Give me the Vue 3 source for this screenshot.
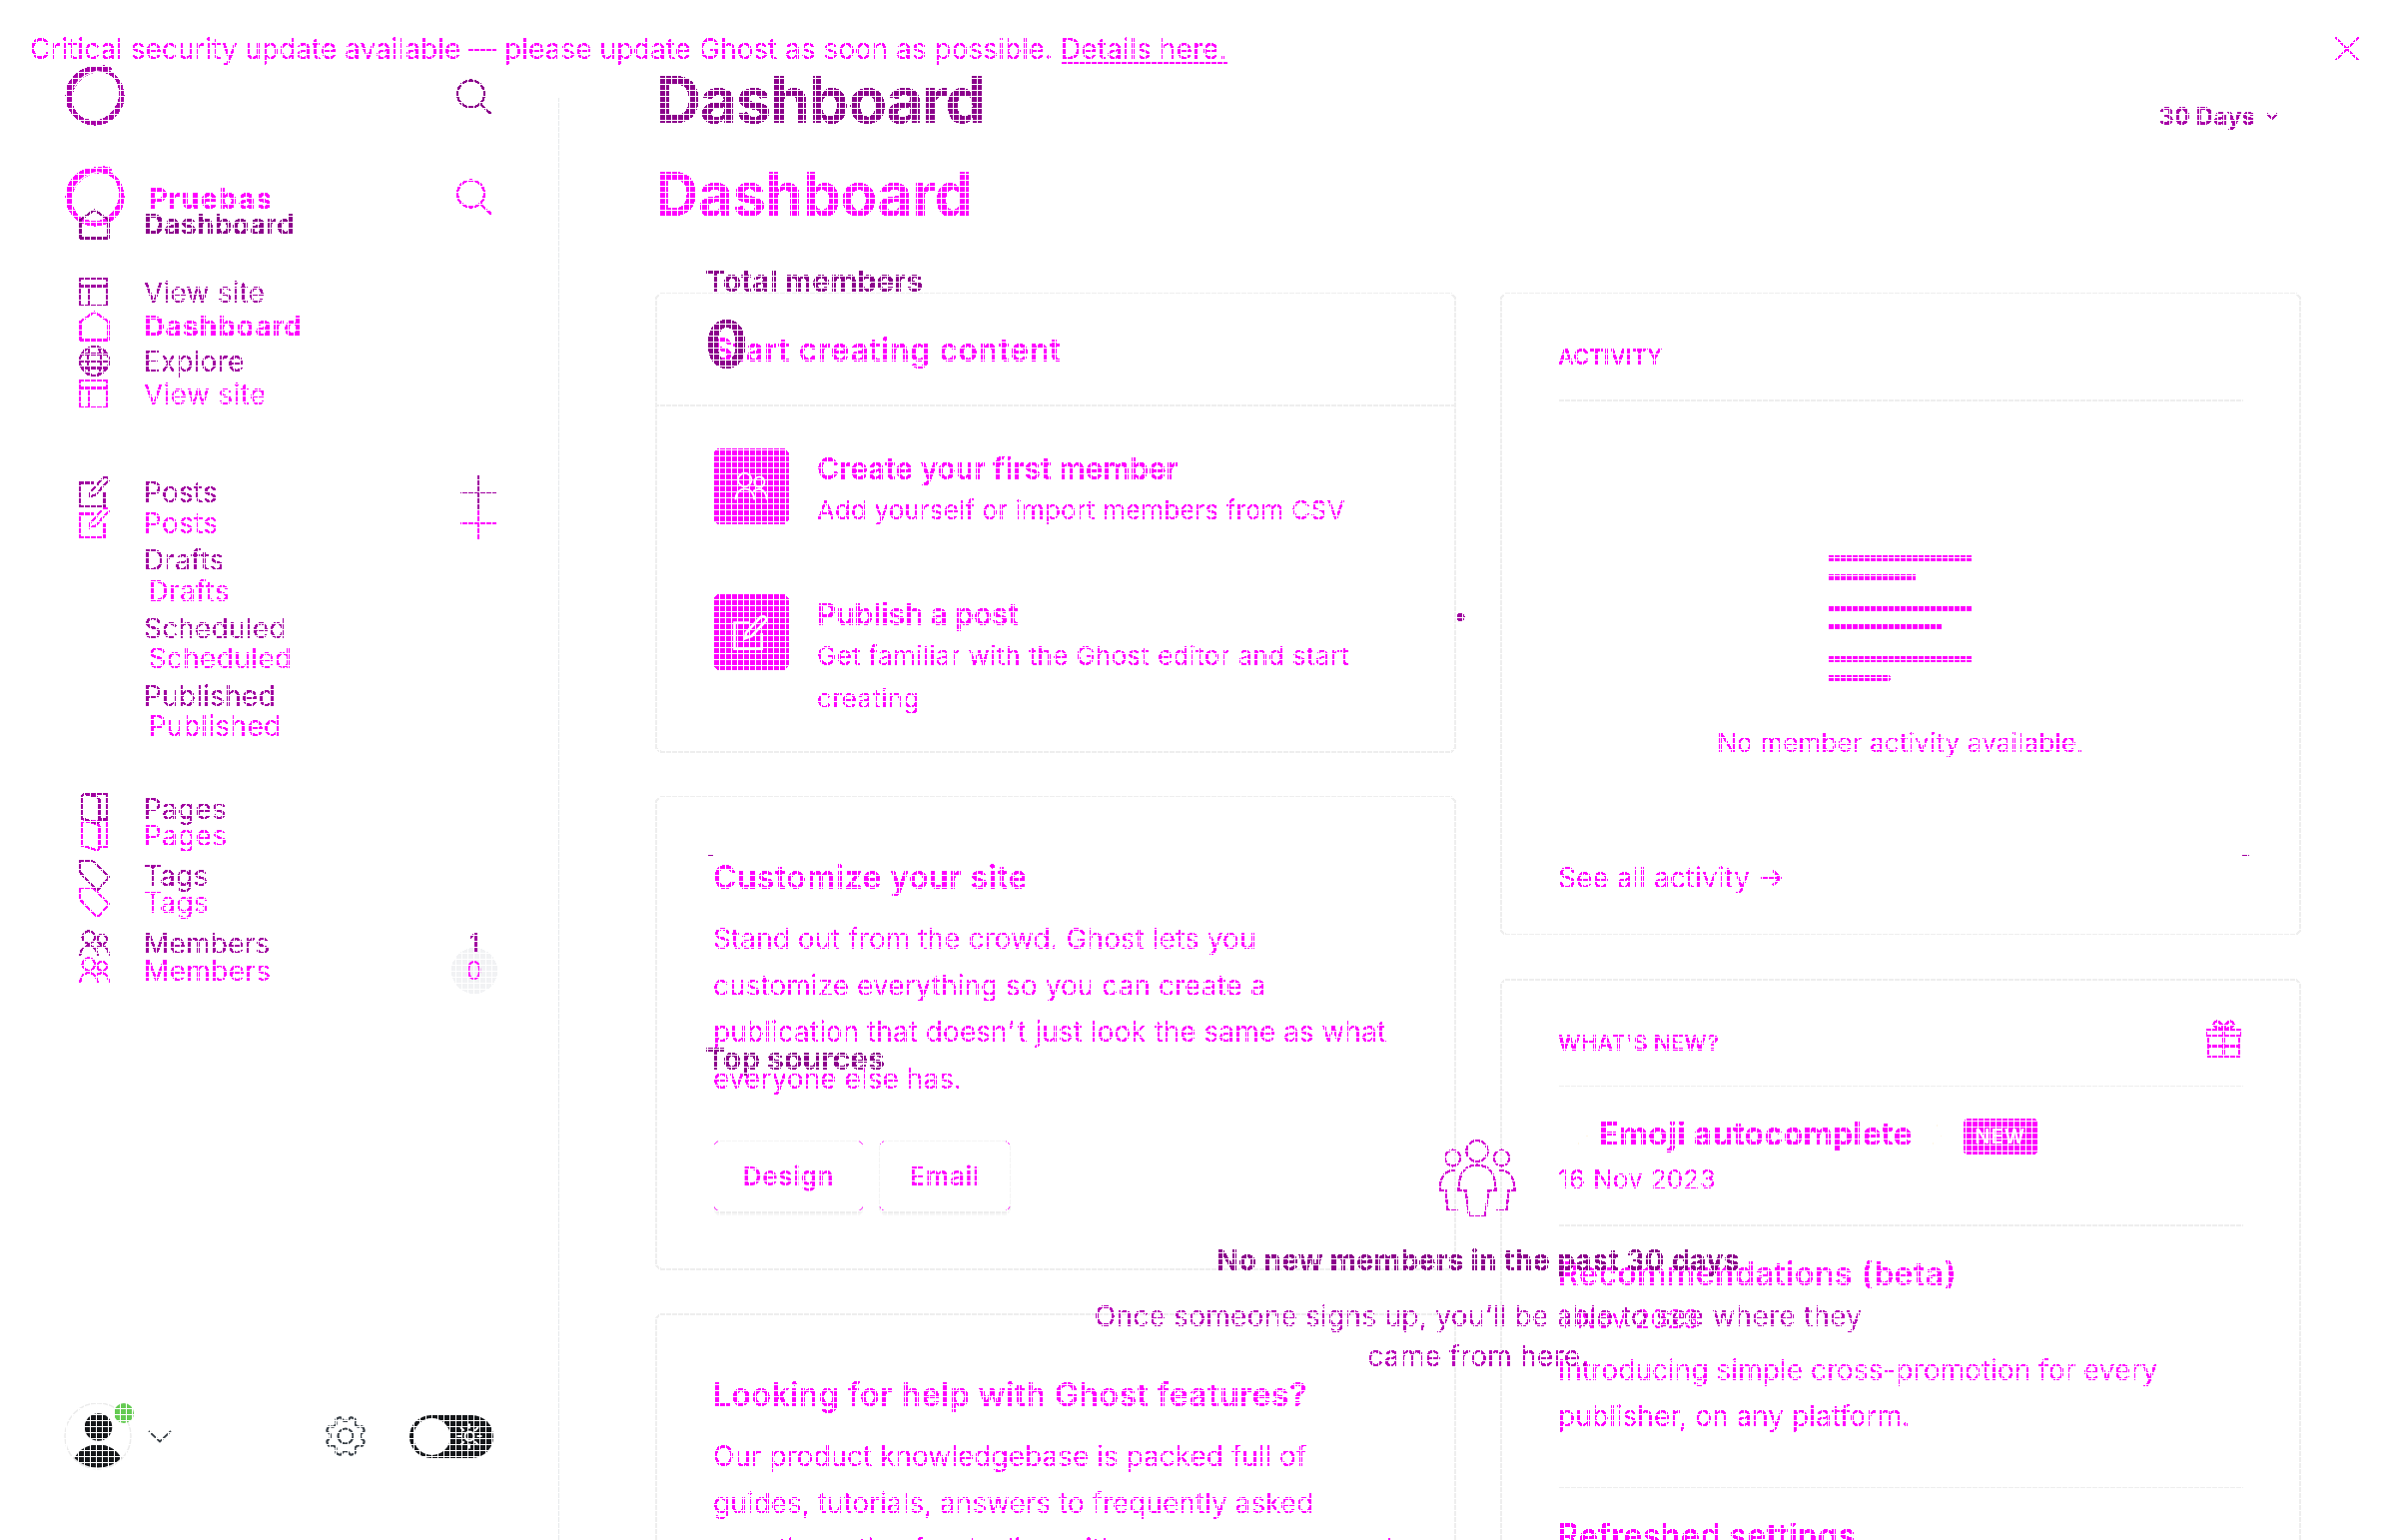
<script setup>
import { h } from 'vue'

const shapes = {
  home: ['M1.5 10.5V29.500H29.500V10.5', 'M0.8 11.500L15.500 1.200L30.200 11.500'],
  site: ['M1.200 2H28.500V29H1.200Z', 'M1.200 9.500H28.500', 'M10.500 9.500V29'],
  globe: ['M1 15.500a14.500 14.500 0 1 0 29 0a14.500 14.500 0 1 0 -29 0', 'M3.500 8.500H27.500M1 15.500H30M2 22.500H29', 'M12 1.500C7.500 9 7.500 22 12 29.500M19 1.500C23.500 9 23.500 22 19 29.500'],
  post: ['M15 6.500H1.200V30H25.500V16', 'M11.500 15.500L24.500 1.500Q28.500 -0.500 30 4L16.500 18.500L10.800 20.500Z'],
  page: ['M6 1.200H28V26.500H22', 'M3 2V25.500L17 30Q20.500 31 20.500 28V7Q20.500 5 18 4.200L7 1.200Q3 0.500 3 4'],
  tag: ['M1.200 1H12.500Q14 1 15.500 2.500L29 15.500Q30.500 17 29 18.500L20 29Q18.500 30.500 17 29L2 13.500Q1.200 12.500 1.200 11Z'],
  members: ['M3.500 9.500a6.200 6.200 0 1 0 12.400 0a6.200 6.200 0 1 0 -12.400 0', 'M18.500 11.500a4.700 4.700 0 1 0 9.400 0a4.700 4.700 0 1 0 -9.400 0', 'M1.200 28C1.200 14.500 18.500 14.500 18.500 28', 'M17.500 20C24 15.500 30 20 30 28'],
}

const Icon = (props) =>
  h('svg', { viewBox: '0 0 31 31', width: 31, height: 31, fill: 'none', stroke: 'currentColor', 'stroke-width': 2 },
    shapes[props.name].map((d) => h('path', { d })))
Icon.props = ['name']

const Logo = () =>
  h('svg', { viewBox: '0 0 62 60', width: 62, height: 60, fill: 'currentColor' }, [
    h('path', { 'fill-rule': 'evenodd', d: 'M0.500 30a29.500 29.500 0 1 0 59 0a29.500 29.500 0 1 0 -59 0ZM7.500 35C6 17 24 5 38 6.500C50 9 55 18 54 31C52.500 42 42 54.500 30 54.500C17 54.500 8.500 46 7.500 35Z' }),
    h('path', { d: 'M9 22C15 10 27 4 46 4.500', fill: 'none', stroke: '#fff', 'stroke-width': 1.2 }),
    h('ellipse', { cx: 39, cy: 2.5, rx: 8, ry: 3 }),
  ])

const Search = () =>
  h('svg', { viewBox: '0 0 36 36', width: 36, height: 36, fill: 'none', stroke: 'currentColor', 'stroke-width': 2.2 }, [
    h('circle', { cx: 14.5, cy: 15, r: 13.5 }),
    h('path', { d: 'M24 25L35 35.500' }),
  ])

const Plus = () =>
  h('svg', { viewBox: '0 0 36 36', width: 36, height: 36, fill: 'none', stroke: 'currentColor', 'stroke-width': 2 },
    [h('path', { d: 'M18.500 1V35M0 18H36' })])

const navOf = (explore, count) => [
  [
    { icon: 'home', label: 'Dashboard', bold: true },
    { icon: 'site', label: 'View site' },
    ...(explore ? [{ icon: 'globe', label: 'Explore' }] : []),
  ],
  [
    { icon: 'post', label: 'Posts', plus: true },
    { label: 'Drafts', sub: true },
    { label: 'Scheduled', sub: true },
    { label: 'Published', sub: true },
  ],
  [
    { icon: 'page', label: 'Pages' },
    { icon: 'tag', label: 'Tags' },
    { icon: 'members', label: 'Members', count },
  ],
]

const layers = [
  { id: 'old', brand: 'Pruebas', nav: navOf(false, '0') },
  { id: 'new', brand: '', nav: navOf(true, '1') },
]

const rays = Array.from({ length: 8 }, (_, i) => i * 45)

// Eight-lobed cog outline sampled in polar coordinates.
const cog = 'M' + Array.from({ length: 144 }, (_, i) => {
  const a = (i / 144) * Math.PI * 2
  const wave = Math.tanh(2.4 * Math.cos(8 * a + Math.PI))
  const r = 17.3 + 2.3 * wave
  return `${(r * Math.cos(a)).toFixed(2)} ${(r * Math.sin(a)).toFixed(2)}`
}).join('L') + 'Z'
</script>

<template>
  <div class="stage">
    <svg class="defs" width="0" height="0">
      <filter id="crisp" color-interpolation-filters="sRGB" x="0" y="0" width="100%" height="100%">
        <feComponentTransfer><feFuncA type="discrete" tableValues="0 0 0 0 1 1 1 1 1 1" /></feComponentTransfer>
      </filter>
    </svg>

    <section v-for="layer in layers" :key="layer.id" class="layer" :class="layer.id">
      <header v-if="layer.id === 'old'" class="banner">
        <p>Critical security update available — please update Ghost as soon as possible. <a>Details here.</a></p>
        <svg width="24" height="24" viewBox="0 0 24 24" fill="none" stroke="currentColor" stroke-width="1.700"><path d="M0 0L24 24M24 0L0 24" /></svg>
      </header>

      <div class="body">
        <aside class="side">
          <div class="brand">
            <Logo />
            <b>{{ layer.brand }}</b>
            <Search class="search" />
          </div>
          <ul v-for="(group, g) in layer.nav" :key="g" class="group">
            <li v-for="item in group" :key="item.label" :class="{ bold: item.bold, sub: item.sub }">
              <span class="ico"><Icon v-if="item.icon" :name="item.icon" /></span>
              <span class="label">{{ item.label }}</span>
              <Plus v-if="item.plus" class="plus" />
              <span v-if="item.count" class="count">{{ item.count }}</span>
            </li>
          </ul>
        </aside>

        <main v-if="layer.id === 'old'" class="main">
          <h1>Dashboard</h1>
          <div class="columns">
            <div class="col">
              <article class="card start">
                <h2>Start creating content</h2>
                <div class="step">
                  <span class="tile">
                    <svg width="38" height="38" viewBox="-2 -2 35 35" fill="none" stroke="#fff" stroke-width="1.800"><path v-for="d in shapes.members" :key="d" :d="d" /></svg>
                  </span>
                  <div><h3>Create your first member</h3><p class="add">Add yourself or import members from CSV</p></div>
                </div>
                <div class="step">
                  <span class="tile">
                    <svg width="38" height="38" viewBox="-1 -2 34 34" fill="none" stroke="#fff" stroke-width="2.400"><path v-for="d in shapes.post" :key="d" :d="d" /></svg>
                  </span>
                  <div><h3>Publish a post</h3><p>Get familiar with the Ghost editor and start<br />creating</p></div>
                </div>
              </article>
              <article class="card info customize">
                <h2>Customize your site</h2>
                <p>Stand out from the crowd. Ghost lets you<br />customize everything so you can create a<br />publication that doesn<span class="apos">’</span>t just look the same as what<br />everyone else has.</p>
                <div class="buttons"><button>Design</button><button>Email</button></div>
              </article>
              <article class="card info help">
                <h2>Looking for help with Ghost features?</h2>
                <p>Our product knowledgebase is packed full of<br />guides, tutorials, answers to frequently asked<br />questions, tips for dealing with common errors, and</p>
              </article>
            </div>
            <div class="col">
              <article class="card side-card activity">
                <h4>ACTIVITY</h4>
                <div class="empty">
                  <svg width="146" height="127" viewBox="0 0 146 127" fill="currentColor">
                    <rect width="145" height="6" rx="1" /><rect y="19" width="88" height="6" rx="1" />
                    <rect y="51" width="145" height="5" rx="1" /><rect y="69" width="114" height="5" rx="1" />
                    <rect y="101" width="145" height="6" rx="1" /><rect y="120" width="63" height="6" rx="2" />
                  </svg>
                  <p>No member activity available.</p>
                </div>
                <a class="see">See all activity
                  <svg width="21" height="18" viewBox="0 0 21 18" fill="none" stroke="currentColor" stroke-width="2"><path d="M0 9H19.500M12 1.500L19.500 9L12 16.500" /></svg>
                </a>
              </article>
              <article class="card side-card news">
                <h4>WHAT'S NEW?
                  <svg width="37" height="38" viewBox="0 0 37 38" fill="none" stroke="currentColor" stroke-width="2">
                    <path d="M1 10H36V16.500H1ZM3 16.500V37H34V16.500M18.500 10V37M3 26.500H34M18.500 9C11 9 7 6 9 3S16 2 18.500 9C21 2 26 0 28 3S26 9 18.500 9" />
                  </svg>
                </h4>
                <div class="entry">
                  <h2 class="emoji"><i class="spark"></i>Emoji autocomplete<i class="spark"></i><em>NEW</em></h2>
                  <time>16 Nov 2023</time>
                </div>
                <div class="entry">
                  <h2>Recommendations (beta)</h2>
                  <time>1 Nov 2023</time>
                  <p>Introducing simple cross-promotion for every<br />publisher, on any platform.</p>
                </div>
                <div class="entry"><h2>Refreshed settings</h2></div>
              </article>
            </div>
          </div>
        </main>

        <main v-else class="main">
          <div class="top">
            <h1>Dashboard</h1>
            <span class="range">30 Days
              <svg width="12" height="8" viewBox="0 0 12 8" fill="none" stroke="currentColor" stroke-width="2"><path d="M1 1L6 6.500L11 1" /></svg>
            </span>
          </div>
          <div class="panel">
            <h5>Total members</h5>
            <strong>0</strong>
            <svg class="chart" width="1552" height="660" viewBox="0 0 1552 660">
              <circle cx="758.500" cy="238" r="4" fill="#a000a0" />
              <path d="M5 476.500H11M1541 476.500H1548" stroke="#a000a0" stroke-width="1.500" />
              <path d="M5 478.500H10M1541 478.500H1547" stroke="#bbb" stroke-width="1" />
            </svg>
            <h5>Top sources</h5>
            <div class="nobody">
              <svg width="80" height="78" viewBox="0 0 80 78" fill="none" stroke="currentColor" stroke-width="2.200">
                <circle cx="39" cy="11.500" r="10.500" />
                <circle cx="14.500" cy="18.500" r="7.800" /><circle cx="63.500" cy="18.500" r="7.800" />
                <path d="M39 25.500C27 25.500 20.500 34 20.500 51H27.500L31 75.500Q31 77 33 77H45Q47 77 47 75.500L50.500 51H57.500C57.500 34 51 25.500 39 25.500Z" />
                <path d="M17 30.500C7 30.500 1.500 38 1.500 51H7.500L9.500 71H20M61 30.500C71 30.500 76.500 38 76.500 51H70.500L68.500 71H58" />
              </svg>
              <b>No new members in the past 30 days</b>
              <p>Once someone signs up, you’ll be able to see where they<br />came from here.</p>
            </div>
          </div>
        </main>
      </div>
    </section>

    <section class="layer shared">
      <div class="rail">
        <footer>
          <span class="avatar">
            <svg width="68" height="68" viewBox="0 0 68 68">
              <circle cx="34" cy="34" r="33" fill="#fff" stroke="#ebebeb" stroke-width="1.500" />
              <circle cx="34.500" cy="25" r="13.800" fill="#15171a" />
              <path d="M10.500 56Q18 42.500 34 42.500T57.500 56Q48 65.500 34 65.500T10.500 56Z" fill="#15171a" />
            </svg>
            <i class="dot"></i>
          </span>
          <svg class="chev" width="24" height="13" viewBox="0 0 24 13" fill="none" stroke="#394047" stroke-width="1.800"><path d="M1 1L12 11.500L23 1" /></svg>
          <svg class="gear" width="42" height="42" viewBox="-21 -21 42 42" fill="none" stroke="#394047" stroke-width="2.200">
            <circle r="7.500" />
            <path :d="cog" stroke-linejoin="round" />
          </svg>
          <span class="toggle">
            <svg width="26" height="26" viewBox="-13 -13 26 26" fill="none" stroke="#fff" stroke-width="2">
              <circle r="4.500" /><path v-for="a in rays" :key="a" :transform="`rotate(${a})`" d="M0 -7.500V-12.500" />
            </svg>
          </span>
        </footer>
      </div>
    </section>

    <div class="mesh"></div>
  </div>
</template>

<style>
body { margin: 0; background: #fff; overflow: hidden; }
</style>

<style scoped>
.stage { position: relative; width: 2400px; height: 1542px; overflow: hidden; background: #fff; font-family: Inter, "Liberation Sans", sans-serif; font-size: 28px; line-height: 40px; }
.defs { position: absolute; }
.layer { position: absolute; inset: 0; overflow: hidden; }
.old, .new { filter: url(#crisp); }
.old { color: #f0f; }
.new { color: #a000a0; }
svg { display: block; flex: none; overflow: visible; }
h1, h2, h3, h4, h5, p, ul { margin: 0; padding: 0; list-style: none; }
h1 { line-height: 80px; font-weight: 700; }
.mesh { position: absolute; inset: 0; pointer-events: none; background: repeating-linear-gradient(90deg, #fff 0 1px, transparent 1px 6px), repeating-linear-gradient(#fff 0 1px, transparent 1px 6px); }

.banner { display: flex; justify-content: space-between; box-sizing: border-box; height: 98px; padding: 29px 38px 0 30px; }
.banner a { text-decoration: underline; text-decoration-thickness: 2px; text-underline-offset: 3px; letter-spacing: .12px; }
.banner svg { margin-top: 8px; }

.body { display: flex; }
.side { box-sizing: border-box; width: 560px; padding-right: 62px; flex: none; }
.brand { display: flex; height: 60px; padding-left: 65px; color: inherit; }
.old .brand { margin-top: 69px; }
.new .brand { margin-top: 66px; color: #a800a8; }
.brand b { margin: 12px 0 0 22px; font-size: 29px; letter-spacing: 1px; }
.search { margin: 12px 5px 0 auto; }
.new .search { margin-top: 13px; color: #8b008b; }
.group li { display: flex; align-items: center; height: 68px; padding-left: 79px; letter-spacing: .35px; }
.new .group li { letter-spacing: .2px; }
.label { padding-top: 1px; }
.old .group:nth-of-type(1) { margin-top: 65px; }
.old .group:nth-of-type(2) { margin-top: 62px; }
.old .group:nth-of-type(2) li { height: 67.600px; }
.old .group:nth-of-type(3) { margin-top: 42px; }
.old .group:nth-of-type(3) li { height: 67.700px; }
.new .group:nth-of-type(1) { margin-top: 64px; }
.new .group:nth-of-type(1) li { height: 68.500px; }
.new .group:nth-of-type(2) { margin-top: 63px; }
.new .group:nth-of-type(3) { margin-top: 45px; }
.new .group:nth-of-type(3) li { height: 67.500px; }
.ico { width: 31px; height: 31px; margin-right: 34px; flex: none; }
.old .sub { padding-left: 83.500px; }
.old .group .bold { font-weight: 700; font-size: 29px; letter-spacing: .5px; }
.new .group .bold { font-weight: 700; color: #8b008b; letter-spacing: .2px; }
.plus { margin: 0 1px 0 auto; }
.count { width: 46px; height: 46px; margin-left: auto; border-radius: 50%; line-height: 46px; text-align: center; font-size: 26px; }
.old .count { background: #f1f2f4; }
.new .count { font-weight: 500; }

.main { width: 1744px; padding-left: 96px; flex: none; }
.old h1 { margin-top: 56px; font-size: 60px; letter-spacing: -.3px; }
.columns { display: flex; gap: 44px; margin-top: 59px; }
.col { display: flex; flex-direction: column; gap: 43px; }
.card { box-sizing: border-box; width: 802px; border: 2px solid #eee; border-radius: 7px; }
.card h2 { font-size: 32px; font-weight: 600; letter-spacing: .44px; }
.start { height: 461px; }
.card.start h2 { display: flex; align-items: center; height: 109px; padding: 1px 0 0 55px; border-bottom: 2px solid #eee; margin-bottom: 42px; letter-spacing: .56px; }
.step { display: flex; gap: 28px; height: 146px; padding-left: 56px; }
.tile { display: grid; place-items: center; width: 76px; height: 76px; border-radius: 7px; background: #f0f; }
.step h3 { font-size: 30px; font-weight: 600; letter-spacing: -.1px; padding-top: 1px; line-height: 39px; }
.step p { font-size: 26px; line-height: 43px; letter-spacing: .3px; }
.step .add { letter-spacing: .12px; }
.info { padding: 60px 0 0 56px; }
.info p { margin-top: 18.400px; line-height: 46.500px; }
.apos { letter-spacing: 3px; }
.customize { height: 475px; }
.customize p { letter-spacing: .05px; }
.help { height: 400px; }
.buttons { display: flex; gap: 15px; margin-top: 39px; }
button { position: relative; width: 151px; height: 71px; padding: 0; border: 1px solid #f4f4f4; border-radius: 7px; background: #fff; color: inherit; font: 600 26px Inter, sans-serif; letter-spacing: .7px; box-shadow: 0 2px #eee, 0 4px #f7f7f7; }
button + button { width: 132px; }
button::before { content: ""; position: absolute; inset: -1px; border: 1px solid #f0f; border-radius: 7px; -webkit-mask: linear-gradient(#000 0 0) 0 0 / 5px 5px no-repeat, linear-gradient(#000 0 0) 100% 0 / 5px 5px no-repeat, linear-gradient(#000 0 0) 0 100% / 5px 5px no-repeat, linear-gradient(#000 0 0) 100% 100% / 5px 5px no-repeat; }

.side-card { padding: 47px 56px 0; }
.side-card h4 { display: flex; justify-content: space-between; height: 57.500px; border-bottom: 2px solid #eee; font-size: 22px; font-weight: 600; line-height: 30px; letter-spacing: .2px; }
.activity { height: 644px; }
.side-card.activity h4 { letter-spacing: 0; }
.empty { display: flex; flex-direction: column; align-items: center; padding-top: 154px; font-size: 26px; line-height: 30px; }
.empty p { margin-top: 46px; letter-spacing: .16px; }
.see { display: flex; align-items: center; gap: 11px; margin-top: 105px; line-height: 30px; letter-spacing: .05px; }
.news { height: 700px; }
.side-card.news h4 { height: 57px; border: 0; }
.news h4 svg { margin: -8px 1px 0 0; }
.entry { border-top: 2px solid #eee; padding: 28px 0 26.500px; }
.entry time { display: block; margin-top: 7px; font-size: 26px; line-height: 36px; letter-spacing: .3px; }
.entry p { margin: 10.500px 0 20px; line-height: 46.300px; letter-spacing: .03px; }
.card .emoji { display: flex; align-items: center; font-weight: 700; letter-spacing: .28px; }
.spark { width: 41px; height: 30px; background: radial-gradient(circle at 60% 20%, #fff6e4 0 1px, transparent 1px), radial-gradient(circle at 70% 55%, #fff6e4 0 1px, transparent 1px), radial-gradient(circle at 50% 80%, #fff6e4 0 1px, transparent 1px); }
.emoji em { margin: 2px 0 -2px 10px; width: 74px; height: 36px; border-radius: 4px; background: #f0f; color: #fff; font: 600 20px/37px Inter, sans-serif; letter-spacing: 1.200px; text-align: center; }

.top { display: flex; justify-content: space-between; padding: 60px 119px 0 0; color: #8b008b; }
.top h1 { font-size: 64px; letter-spacing: -1.300px; }
.range { display: flex; align-items: center; gap: 11px; height: 40px; margin-top: 37px; font-size: 24px; font-weight: 700; letter-spacing: .1px; color: #a800a8; }
.panel { padding: 121px 0 0 48px; }
.panel h5 { padding-left: 2px; font-size: 30px; font-weight: 700; color: #8b008b; }
.panel strong { display: block; height: 71px; padding: 8px 0 0 2px; font-size: 64px; line-height: 71px; color: #8b008b; }
.chart { width: 1552px; }
.nobody { display: flex; flex-direction: column; align-items: center; width: 1552px; margin-top: 61px; text-align: center; color: #b800b8; }
.nobody svg { color: #d400d4; }
.nobody b { margin-top: 23px; font-size: 29px; letter-spacing: .05px; color: #8b008b; }
.nobody p { margin-top: 16px; letter-spacing: .25px; }

.rail { display: flex; align-items: flex-end; box-sizing: border-box; width: 560px; height: 1444px; margin-top: 98px; border-right: 1px solid #e6e9eb; }
footer { display: flex; align-items: center; width: 100%; height: 68px; padding: 0 0 70px 64px; }
.avatar { position: relative; width: 68px; height: 68px; }
.dot { position: absolute; left: 50px; top: 1px; width: 20px; height: 20px; border-radius: 50%; background: #65cb53; }
.chev { margin-left: 16px; }
.gear { margin: 0 0 0 153px; }
.toggle { display: flex; align-items: center; justify-content: flex-end; position: relative; box-sizing: border-box; width: 84px; height: 43px; margin-left: 43px; padding-right: 11px; border-radius: 22px; background: #15171a; }
.toggle::before { content: ""; position: absolute; left: 4px; top: 3px; width: 37px; height: 37px; border-radius: 50%; background: #fff; }
</style>
